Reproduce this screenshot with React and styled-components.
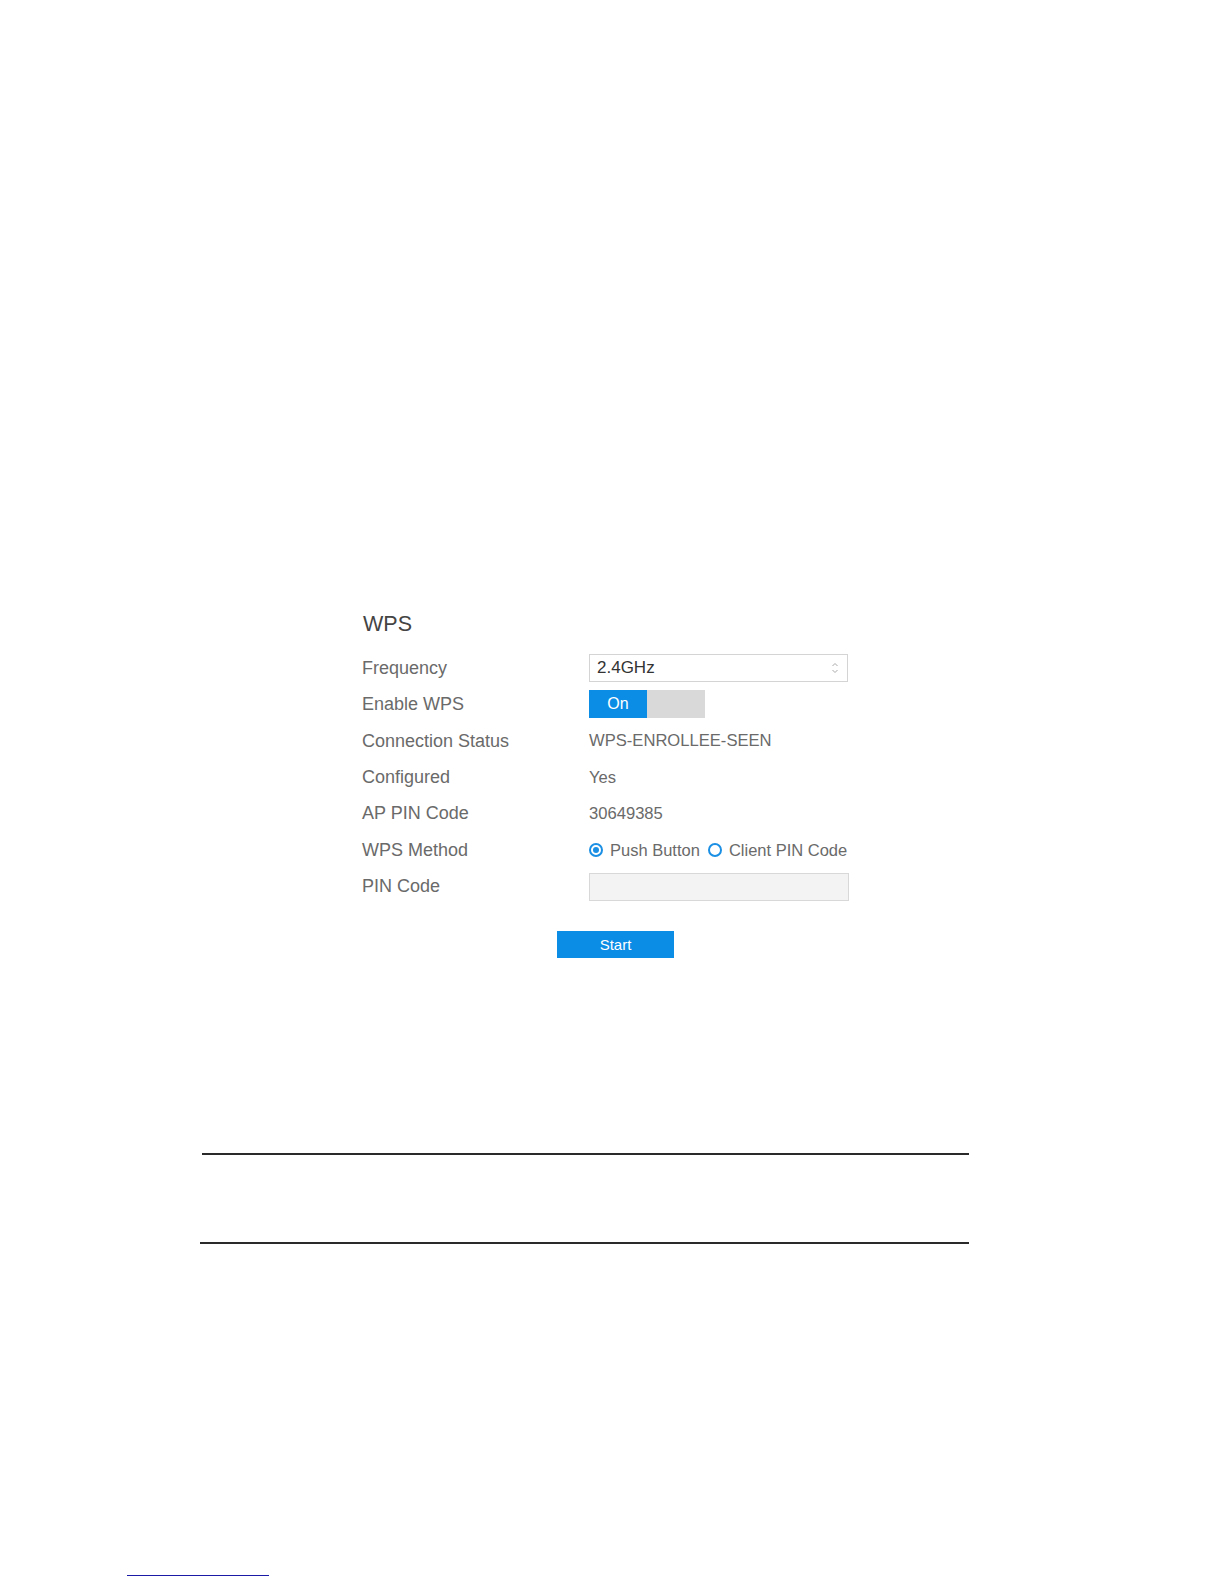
import React from 'react';
import styled, { createGlobalStyle } from 'styled-components';

const GlobalStyle = createGlobalStyle`
    body {
        margin: 0;
        background: #ffffff;
        font-family: "Liberation Sans", Arial, sans-serif;
    }
`;

const Page = styled.div`
    width: 1224px;
    min-height: 1584px;
    padding-top: 612px;
    box-sizing: border-box;
    display: flex;
    flex-direction: column;
`;

const Panel = styled.section`
    margin-left: 362px;
    width: 500px;
`;

const Heading = styled.h2`
    margin: 0 0 14px 1px;
    font-size: 21.5px;
    line-height: 24px;
    font-weight: normal;
    color: #444;
`;

const FormGrid = styled.div`
    display: grid;
    grid-template-columns: 227px 273px;
    grid-auto-rows: 36.3px;
    align-items: center;
`;

const Label = styled.div`
    font-size: 18px;
    color: #6a6a6a;
    line-height: 20px;
`;

const Value = styled.div`
    font-size: 16.6px;
    color: #6a6a6a;
    line-height: 20px;
    padding-top: 1px;
`;

const SelectBox = styled.div`
    position: relative;
    width: 259px;
    height: 28px;
    box-sizing: border-box;
    border: 1px solid #d4d4d4;
    display: flex;
    align-items: center;
    padding-left: 7px;
    font-size: 17px;
    color: #333;
`;

const Arrows = styled.svg`
    position: absolute;
    right: 8px;
    top: 6px;
`;

const Toggle = styled.div`
    display: flex;
    width: 116px;
    height: 28px;
`;

const ToggleHalf = styled.div`
    flex: 1;
    display: flex;
    align-items: center;
    justify-content: center;
    background: ${p => (p.$active ? '#0b8de6' : '#d9d9d9')};
    color: #fff;
    font-size: 16px;
`;

const RadioGroup = styled.div`
    display: flex;
    align-items: center;
    font-size: 16.5px;
    color: #6a6a6a;
    padding-top: 1px;
    white-space: nowrap;
`;

const RadioOption = styled.label`
    display: flex;
    align-items: center;
    gap: 7px;
    margin-right: 8px;
`;

const RadioDot = styled.span`
    flex: none;
    width: 14px;
    height: 14px;
    box-sizing: border-box;
    border-radius: 50%;
    border: 2px solid #1a8fe3;
    display: flex;
    align-items: center;
    justify-content: center;

    &::after {
        content: '';
        width: 6px;
        height: 6px;
        border-radius: 50%;
        background: ${p => (p.$checked ? '#1a8fe3' : 'transparent')};
    }
`;

const TextInput = styled.div`
    width: 260px;
    height: 28px;
    box-sizing: border-box;
    background: #f3f3f3;
    border: 1px solid #d8d8d8;
    margin-top: 2px;
`;

const StartButton = styled.button`
    margin: 27px 0 0 195px;
    width: 117px;
    height: 27px;
    border: none;
    background: #0b8de6;
    color: #fff;
    font-family: "Liberation Sans", Arial, sans-serif;
    font-size: 15px;
    padding: 0;
`;

const Rule = styled.div`
    height: 2px;
    background: #2a2a2a;
    margin-left: ${p => p.$left}px;
    width: ${p => 969 - p.$left}px;
    margin-top: ${p => p.$top}px;
`;

const LinkLine = styled.div`
    margin: 331px 0 0 127px;
    width: 142px;
    height: 1px;
    background: #1a1aa6;
`;

function Radio({ checked, label }) {
    return (
        <RadioOption>
            <RadioDot $checked={checked} />
            {label}
        </RadioOption>
    )
}

export default function App() {
    return (
        <Page>
            <GlobalStyle />
            <Panel>
                <Heading>WPS</Heading>
                <FormGrid>
                    <Label>Frequency</Label>
                    <SelectBox>
                        2.4GHz
                        <Arrows width="8" height="14" viewBox="0 0 8 14">
                            <path d="M1.5 5 L4 2.5 L6.5 5 M1.5 9 L4 11.5 L6.5 9" stroke="#aaa" strokeWidth="1" fill="none" />
                        </Arrows>
                    </SelectBox>

                    <Label>Enable WPS</Label>
                    <Toggle>
                        <ToggleHalf $active>On</ToggleHalf>
                        <ToggleHalf />
                    </Toggle>

                    <Label>Connection Status</Label>
                    <Value>WPS-ENROLLEE-SEEN</Value>

                    <Label>Configured</Label>
                    <Value>Yes</Value>

                    <Label>AP PIN Code</Label>
                    <Value>30649385</Value>

                    <Label>WPS Method</Label>
                    <RadioGroup>
                        <Radio checked label="Push Button" />
                        <Radio label="Client PIN Code" />
                    </RadioGroup>

                    <Label>PIN Code</Label>
                    <TextInput />
                </FormGrid>
                <StartButton>Start</StartButton>
            </Panel>
            <Rule $left={202} $top={195} />
            <Rule $left={200} $top={87} />
            <LinkLine />
        </Page>
    )
}
